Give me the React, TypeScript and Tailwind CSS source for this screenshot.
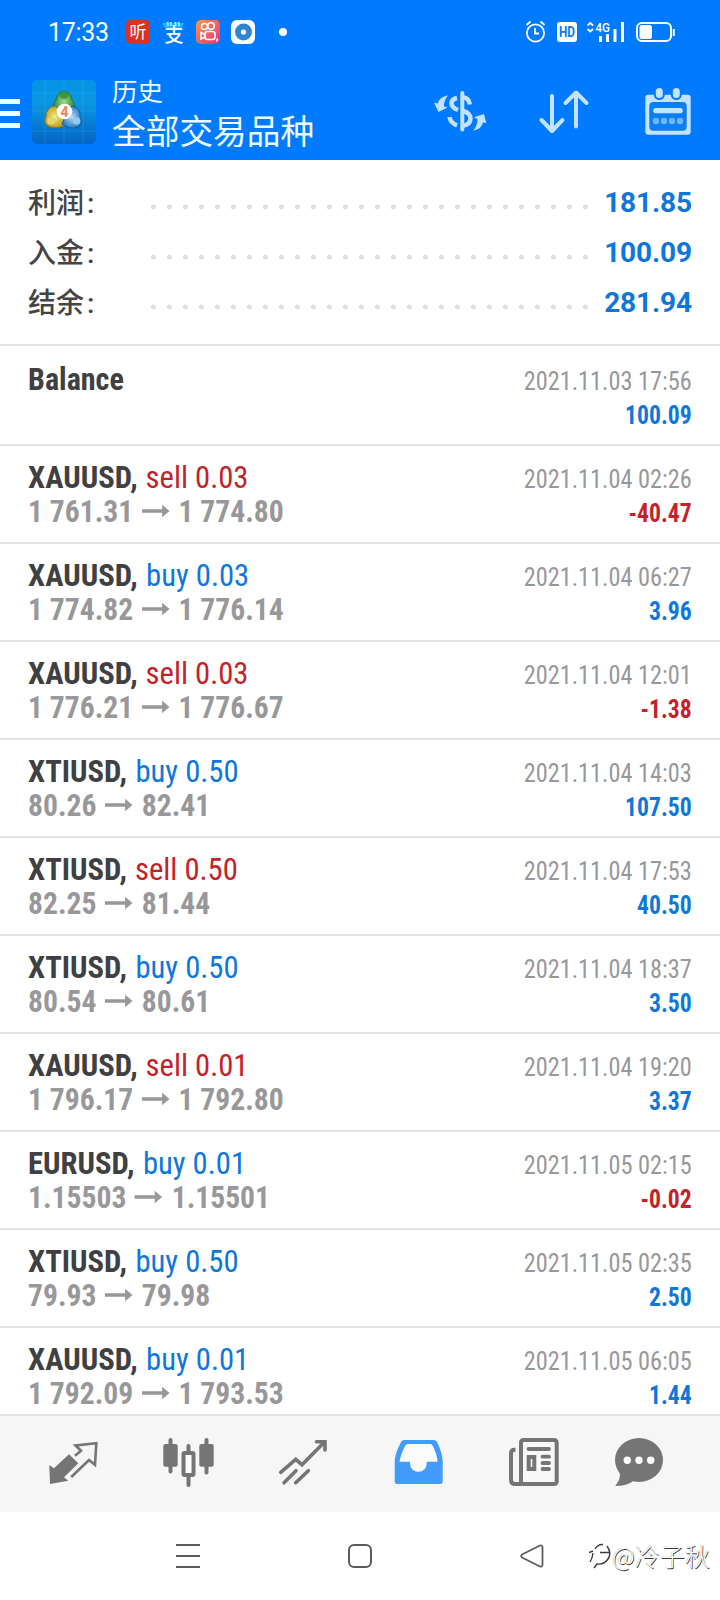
import React from "react";

type Deal = {
  symbol: string;
  side?: "buy" | "sell";
  volume?: string;
  open?: string;
  close?: string;
  time: string;
  profit: string;
};

const deals: Deal[] = [
  { symbol: "Balance", time: "2021.11.03 17:56", profit: "100.09" },
  { symbol: "XAUUSD", side: "sell", volume: "0.03", open: "1 761.31", close: "1 774.80", time: "2021.11.04 02:26", profit: "-40.47" },
  { symbol: "XAUUSD", side: "buy", volume: "0.03", open: "1 774.82", close: "1 776.14", time: "2021.11.04 06:27", profit: "3.96" },
  { symbol: "XAUUSD", side: "sell", volume: "0.03", open: "1 776.21", close: "1 776.67", time: "2021.11.04 12:01", profit: "-1.38" },
  { symbol: "XTIUSD", side: "buy", volume: "0.50", open: "80.26", close: "82.41", time: "2021.11.04 14:03", profit: "107.50" },
  { symbol: "XTIUSD", side: "sell", volume: "0.50", open: "82.25", close: "81.44", time: "2021.11.04 17:53", profit: "40.50" },
  { symbol: "XTIUSD", side: "buy", volume: "0.50", open: "80.54", close: "80.61", time: "2021.11.04 18:37", profit: "3.50" },
  { symbol: "XAUUSD", side: "sell", volume: "0.01", open: "1 796.17", close: "1 792.80", time: "2021.11.04 19:20", profit: "3.37" },
  { symbol: "EURUSD", side: "buy", volume: "0.01", open: "1.15503", close: "1.15501", time: "2021.11.05 02:15", profit: "-0.02" },
  { symbol: "XTIUSD", side: "buy", volume: "0.50", open: "79.93", close: "79.98", time: "2021.11.05 02:35", profit: "2.50" },
  { symbol: "XAUUSD", side: "buy", volume: "0.01", open: "1 792.09", close: "1 793.53", time: "2021.11.05 06:05", profit: "1.44" },
];

const summary = [
  { label: "利润", value: "181.85" },
  { label: "入金", value: "100.09" },
  { label: "结余", value: "281.94" },
];

function StatusBar() {
  return (
    <div className="flex h-16 items-center pl-[48px] pr-[45px] text-white">
      <span className="w-[62px] whitespace-nowrap text-[25px] leading-none tracking-[-0.3px]">17:33</span>
      <svg className="ml-[15px]" width="132" height="26" viewBox="0 0 132 26">
        <rect x="1" y="1" width="24" height="24" rx="5" fill="#e0301f" />
        <text x="13" y="19" fontSize="17" textAnchor="middle" fill="#fff">听</text>
        <path d="M37 4h22q-1 6-11 7q-10-1-11-7z" fill="#22b4ee" />
        <text x="48" y="6.500" fontSize="5.500" fontWeight="700" textAnchor="middle" fill="#fff">11.11</text>
        <text x="49" y="22.500" fontSize="19" fontWeight="500" textAnchor="middle" fill="#fff">支</text>
        <defs>
          <linearGradient id="ks" x1="0" y1="0" x2="1" y2="1">
            <stop offset="0" stopColor="#f79a4c" />
            <stop offset="1" stopColor="#ec2f7c" />
          </linearGradient>
        </defs>
        <rect x="71" y="1" width="24" height="24" rx="5" fill="url(#ks)" />
        <g fill="none" stroke="#fff" strokeWidth="1.6">
          <circle cx="79.500" cy="7.500" r="3" />
          <circle cx="86" cy="7" r="3.300" />
          <rect x="80" y="12.500" width="10" height="8" rx="2.500" />
          <path d="M80 15.500l-4-2v6.500l4-2M92.500 19.500l-.8 3" />
        </g>
        <rect x="106" y="1" width="24" height="24" rx="6" fill="#fff" />
        <circle cx="118.500" cy="13" r="8.500" fill="#2f86d0" />
        <circle cx="118.500" cy="13" r="2.600" fill="#fff" />
      </svg>
      <span className="ml-[22px] size-2 rounded-full bg-white" />
      <svg className="ml-auto" width="150" height="24" viewBox="0 0 150 24" fill="none" stroke="#fff">
        <circle cx="10.500" cy="13" r="8.600" strokeWidth="1.800" />
        <path d="M10 8v5.500h4M1.500 5l4-3.500M19.500 5l-4-3.500" strokeWidth="1.800" />
        <rect x="32" y="2" width="20" height="20" rx="3" fill="#fff" stroke="none" />
        <text x="42" y="17.300" fontSize="15" fontWeight="700" textAnchor="middle" fill="#087bf5" stroke="none" textLength="16" lengthAdjust="spacingAndGlyphs">HD</text>
        <path d="M62.500 5.500l2.800-2.500l2.800 2.500M62.500 9l2.800 2.500l2.800-2.500" strokeWidth="1.800" />
        <text x="70.500" y="11.800" fontSize="13.500" fontWeight="500" fill="#fff" stroke="none" textLength="14.500" lengthAdjust="spacingAndGlyphs">4G</text>
        <path d="M75.500 16v6M82.500 14v8M90 9v13M97.500 2v20" strokeWidth="3" />
        <rect x="112" y="3" width="34" height="18" rx="5" strokeWidth="2" />
        <rect x="114.500" y="5" width="12.500" height="14" rx="2.500" fill="#fff" stroke="none" />
        <path d="M148.800 9v7" strokeWidth="2" />
      </svg>
    </div>
  );
}

function AppLogo() {
  return (
    <svg width="64" height="64" viewBox="0 0 64 64">
      <defs>
        <linearGradient id="lg" x1="0" y1="0" x2="0" y2="1">
          <stop offset="0" stopColor="#0593e6" />
          <stop offset=".35" stopColor="#0b97e2" />
          <stop offset="1" stopColor="#0464c4" />
        </linearGradient>
        <radialGradient id="gr"><stop offset="0" stopColor="#a3d98a" /><stop offset="1" stopColor="#2f8a3c" /></radialGradient>
        <radialGradient id="ye"><stop offset="0" stopColor="#f6ea8c" /><stop offset="1" stopColor="#bda227" /></radialGradient>
        <radialGradient id="bl"><stop offset="0" stopColor="#b4dcf7" /><stop offset="1" stopColor="#2b7dc0" /></radialGradient>
      </defs>
      <rect width="64" height="64" rx="5" fill="url(#lg)" />
      <path d="M13 0v64M32 0v64M51 0v64M0 13h64M0 31h64M0 51h64" stroke="#4cb8ee" strokeOpacity=".25" />
      <path d="M32 11q7 1 8 9q6 7-1 13h-14q-7-6-1-13q1-8 8-9z" fill="url(#gr)" stroke="#1d6b38" strokeWidth=".8" />
      <path d="M23 26q-9 1-9 11q-3 6 2 9q6 3 16 0q2-8-2-14z" fill="url(#ye)" stroke="#7f741f" strokeWidth=".8" />
      <path d="M40 26q9 2 8 11q4 6-2 10q-9 3-16-3q3-10 10-18z" fill="url(#bl)" stroke="#16558f" strokeWidth=".8" />
      <circle cx="32" cy="15" r="3.800" fill="#3a9440" />
      <circle cx="19" cy="41" r="3.800" fill="#e8d465" />
      <circle cx="44.500" cy="41" r="3.800" fill="#8ecbf0" />
      <circle cx="32.500" cy="31.500" r="7.800" fill="#fff" />
      <text x="32.500" y="36.500" fontSize="14" fontWeight="700" textAnchor="middle" fill="#ee8358">4</text>
    </svg>
  );
}

function Header() {
  return (
    <header className="h-40 shrink-0 bg-[#007aff] text-[#effaff]">
      <StatusBar />
      <div className="flex h-24 items-center pr-7">
        <div className="flex w-5 flex-col gap-[7px] pt-[3px]">
          <span className="h-[5px] bg-[#f2fbff]" />
          <span className="h-[5px] bg-[#f2fbff]" />
          <span className="h-[5px] bg-[#f2fbff]" />
        </div>
        <div className="ml-3"><AppLogo /></div>
        <div className="ml-4 flex flex-col pt-[5px]">
          <span className="text-[25.5px] leading-[36px]">历史</span>
          <span className="text-[33.7px] leading-[46px]">全部交易品种</span>
        </div>
        <svg className="ml-auto" width="56" height="52" viewBox="0 0 56 52" fill="none" stroke="#c4e3ff">
          <path d="M30.300 7v36.500" strokeWidth="4" strokeLinecap="round" />
          <path d="M25 12Q19.500 13 19.500 17.500Q19.500 21.500 26 24M31 11.300Q37 12 37.800 18.500M31 25Q38.500 27 38.500 32.500Q38.500 38.500 31 39.800M17.500 31Q18.500 37 25 39.300" strokeWidth="4.500" />
          <path d="M16 9.300Q7 11 6 17.500L2 16.700L6.500 26L15.500 21.500L11.800 20.300Q12 14.500 16 9.300zM41.300 44.700Q50 43 50.800 36.500L54.300 37L52 28L42 31.300L45.600 33.300Q45.500 39.500 41.300 44.700z" fill="#c4e3ff" stroke="none" />
        </svg>
        <svg className="ml-[50px]" width="52" height="52" viewBox="0 0 52 52" fill="none" stroke="#c4e3ff" strokeWidth="4" strokeLinecap="round" strokeLinejoin="round">
          <path d="M14 10v35M3.500 34L14 45L24.500 34M38 40.500V6.500M27.500 17L38 6.500L48.500 17" />
        </svg>
        <svg className="ml-[54px]" width="48" height="52" viewBox="0 0 48 52" fill="#c4e3ff">
          <rect x="1.300" y="8.700" width="45.400" height="40" rx="3" />
          <rect x="5.300" y="16" width="37.400" height="28.700" rx="4" fill="#0a7ef5" />
          <g stroke="#007aff" strokeWidth="2">
            <rect x="10.800" y="1" width="9" height="12" rx="4.500" />
            <rect x="27.800" y="1" width="9" height="12" rx="4.500" />
          </g>
          <rect x="9.300" y="22" width="29.400" height="5.300" rx="2" />
          <g fillOpacity=".55">
            <circle cx="12" cy="35" r="3.200" />
            <circle cx="20" cy="35" r="3.200" />
            <circle cx="28" cy="35" r="3.200" />
            <circle cx="36" cy="35" r="3.200" />
          </g>
        </svg>
      </div>
    </header>
  );
}

function Summary() {
  return (
    <section className="flex h-[186px] shrink-0 flex-col border-b-2 border-[#e2e2e2] px-7 pt-[18px]">
      {summary.map((s) => (
        <div key={s.label} className="flex h-[50px] items-center text-[28px]">
          <span className="w-[122px] pt-[2px] font-medium text-[#444]">{s.label}<span className="ml-[3px]">:</span></span>
          <svg className="mt-[8px]" width="438" height="6" viewBox="0 0 438 6">
            <path d="M3.400 3H436" stroke="#dfdfdf" strokeWidth="5" strokeLinecap="round" strokeDasharray="0 16" />
          </svg>
          <b className="ml-auto tracking-[-0.1px] text-[#0f76dc]">{s.value}</b>
        </div>
      ))}
    </section>
  );
}

function DealRow({ deal }: { deal: Deal }) {
  const loss = deal.profit.startsWith("-");
  return (
    <div className="flex h-[98px] shrink-0 justify-between border-b-2 border-[#e2e2e2] px-7 pt-[14px] first:h-[100px] first:pt-4">
      <div className="whitespace-nowrap text-[32px] leading-[34px]">
        {deal.side ? (
          <div className="origin-left scale-x-[0.957] text-[#404042]">
            <b>{deal.symbol},</b>{" "}
            <span className={deal.side === "sell" ? "ml-[1px] text-[#c4222a]" : "ml-[1.5px] text-[#0f76dc]"}>{deal.side} {deal.volume}</span>
          </div>
        ) : (
          <div className="origin-left scale-x-[0.94] font-bold text-[#404042]">{deal.symbol}</div>
        )}
        {deal.open && (
          <div className="flex origin-left scale-x-[0.925] items-center font-bold text-[#98989a]">
            <span>{deal.open}</span>
            <svg className="ml-[9px] mr-[10px]" width="30" height="14" viewBox="0 0 30 14" fill="#98989a">
              <path d="M0 5.300h22V.8l8 6.200l-8 6.200V8.700H0z" />
            </svg>
            <span>{deal.close}</span>
          </div>
        )}
      </div>
      <div className="whitespace-nowrap pt-[2px] text-right text-[26px] leading-[34px]">
        <div className="origin-right scale-x-[0.935] text-[#98989a]">{deal.time}</div>
        <div className={loss ? "origin-right scale-x-[0.91] font-bold text-[#c4222a]" : "origin-right scale-x-[0.91] font-bold text-[#0f76dc]"}>{deal.profit}</div>
      </div>
    </div>
  );
}

function TabBar() {
  return (
    <nav className="flex h-[98px] shrink-0 items-center border-t-2 border-[#e2e2e2] bg-[#f6f6f6] pl-[47px] text-[#757575]">
      <svg width="52" height="56" viewBox="0 0 52 56" fill="none" stroke="currentColor" strokeWidth="2.600">
        <path d="M2.300 29L7 32.300L22 18.300L31.300 27.300L17 41.300L21.300 44.700L3 48z" fill="currentColor" stroke="none" />
        <path d="M28 19.700L34 14.700L28.500 9.500L49.300 7.300L48 28.800L42 24L24.300 41" />
      </svg>
      <svg className="ml-[63px]" width="52" height="56" viewBox="0 0 52 56" fill="currentColor">
        <rect x="1.300" y="8" width="14.400" height="22.700" rx="2" />
        <rect x="37.300" y="8" width="14.400" height="22.700" rx="2" />
        <rect x="21.500" y="17" width="10" height="22" rx="1" fill="#fff" stroke="currentColor" strokeWidth="4" />
        <path d="M8.500 4v31.500M44.500 4v32.500M26.500 10v6M26.500 40v9" stroke="currentColor" strokeWidth="4" strokeLinecap="round" />
      </svg>
      <svg className="ml-[63px]" width="52" height="56" viewBox="0 0 52 56" fill="none" stroke="currentColor" strokeWidth="3.600" strokeLinecap="round">
        <path d="M3.700 36.300L18.700 23.300L25 28.700L47.500 6M39.500 5.700H48V14M7 46.700L19 34.700M18.700 46.700L31.300 34.700" />
      </svg>
      <svg className="ml-[63px]" width="52" height="56" viewBox="0 0 52 56" fill="#439cfb">
        <path d="M12.500 4H41.500Q44.500 4 45.500 7Q50.700 18 50.700 26V45.500Q50.700 48 48.200 48H5.200Q2.700 48 2.700 45.500V26Q2.700 18 8.500 7Q9.500 4 12.500 4z" />
        <path d="M15.500 8H38.500Q40 8 40.800 10Q45.300 19 45.500 25.700H34.700V27.500A8.350 8.350 0 0 1 18 27.500V25.700H7.500Q8.500 19 13 10Q14 8 15.500 8z" fill="#fbfbfb" />
      </svg>
      <svg className="ml-[63px]" width="53" height="56" viewBox="0 0 53 56" fill="none" stroke="currentColor" strokeWidth="4">
        <path d="M8.500 13.700H7.500Q4 13.700 4 17.500V44Q4 48 8 48H15" />
        <rect x="14" y="4" width="35.700" height="44" rx="2.500" fill="#f8f8f8" />
        <path d="M21.500 13H42M35.500 20.700H42M35.500 27H42M35.500 33H42" strokeLinecap="round" strokeWidth="3.800" />
        <rect x="21.700" y="21" width="5.600" height="12" />
      </svg>
      <svg className="ml-[53px]" width="52" height="56" viewBox="0 0 52 56" fill="currentColor">
        <ellipse cx="26" cy="24" rx="24" ry="22" />
        <path d="M6.500 36Q8.500 42 2.300 50Q14 50 20.300 45L20 36z" />
        <g fill="#fff">
          <circle cx="14.300" cy="24.300" r="3.700" />
          <circle cx="26" cy="24.300" r="3.700" />
          <circle cx="37.700" cy="24.300" r="3.700" />
        </g>
      </svg>
    </nav>
  );
}

function SystemNav() {
  return (
    <div className="flex h-[88px] shrink-0 items-center bg-white pl-[176px]">
      <svg width="24" height="24" viewBox="0 0 24 24" stroke="#5c5c5c" strokeWidth="2">
        <path d="M0 1h24M0 12h24M0 23h24" />
      </svg>
      <svg className="ml-[148px]" width="24" height="24" viewBox="0 0 24 24" fill="none" stroke="#5c5c5c" strokeWidth="2">
        <rect x="1" y="1" width="22" height="22" rx="5" />
      </svg>
      <svg className="ml-[148px]" width="24" height="24" viewBox="0 0 24 24" fill="none" stroke="#5c5c5c" strokeWidth="1.800" strokeLinejoin="round">
        <path d="M2 10.500L20 1.500Q22.500 .8 22.500 3.500V20.500Q22.500 23.200 20 22.500L2 13.500Q.5 12 2 10.500z" />
      </svg>
      <svg className="ml-[45px]" width="22" height="30" viewBox="0 0 22 30" fill="none" stroke="#3c3c3c" strokeWidth="1.400">
        <path d="M0 11.500L4 10M6 8Q9 3 14 3.500M4 12Q3.500 17 1 21M11 11.500h9M18 5Q23 12 19 18Q15 24 8 23L5 27" />
      </svg>
      <span className="ml-[1px] mt-[-3px] whitespace-nowrap font-['Noto_Sans_CJK_SC',sans-serif] text-[25px] font-light leading-[36px] text-white [text-shadow:0.8px_0.8px_0.4px_#3a3a3a,-0.4px_-0.4px_0.4px_#bbb]">@冷子秋</span>
    </div>
  );
}

export default function App() {
  return (
    <div className="flex h-[1600px] w-[720px] flex-col overflow-hidden bg-white font-[Roboto,'Noto_Sans_CJK_SC',sans-serif]">
      <Header />
      <Summary />
      <main className="min-h-0 flex-1 overflow-hidden [font-stretch:75%]">
        {deals.map((d) => <DealRow key={d.time} deal={d} />)}
      </main>
      <TabBar />
      <SystemNav />
    </div>
  );
}
